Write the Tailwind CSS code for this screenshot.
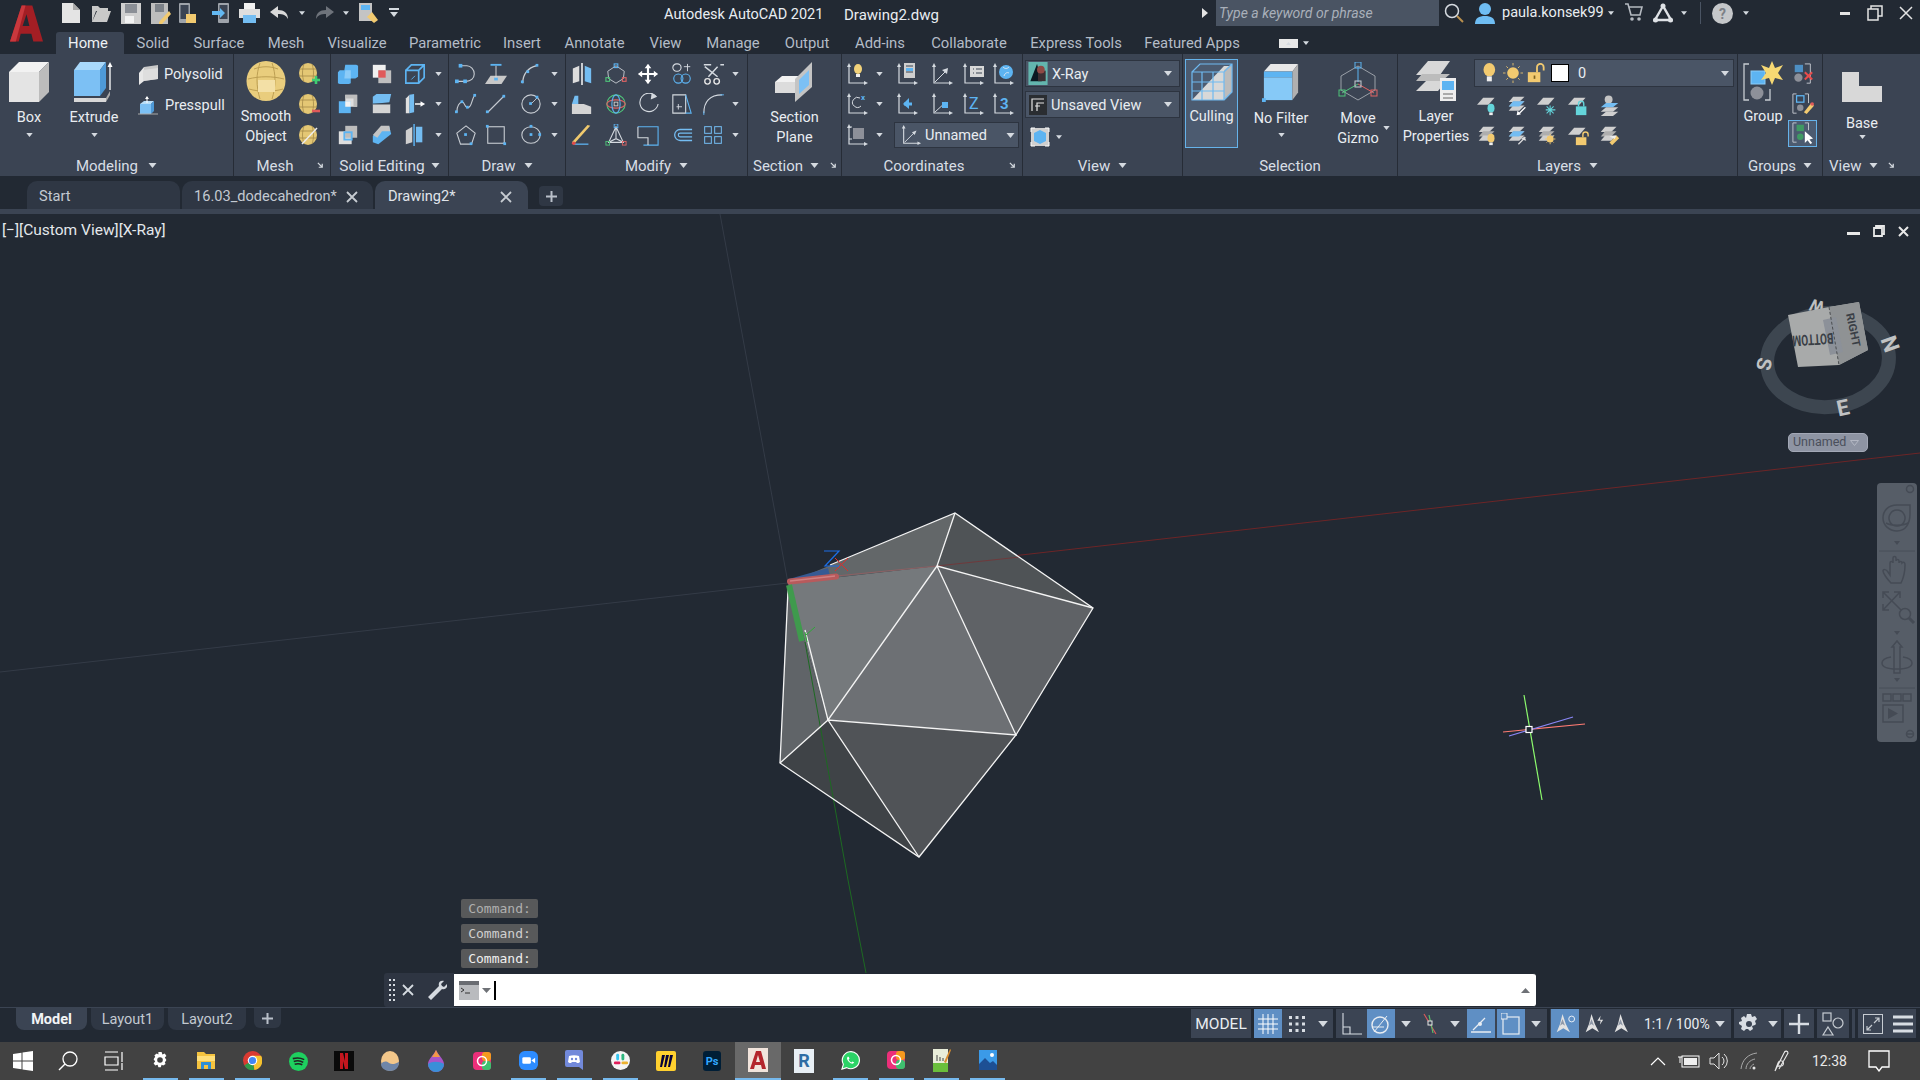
<!DOCTYPE html>
<html>
<head>
<title>Autodesk AutoCAD 2021</title>
<script src="https://cdn.jsdelivr.net/npm/@tailwindcss/browser@4"></script>
</head>
<body class="bg-[#222933] overflow-hidden">

<!-- shared icons -->
<svg class="absolute w-0 h-0">
  <symbol id="dn" viewBox="0 0 8 5"><polygon points="0,0 8,0 4,5" fill="#d5dae0"/></symbol>
  <symbol id="corner" viewBox="0 0 8 8"><path d="M1 1l5 5M6 2v4H2" stroke="#d5dae0" stroke-width="1.4" fill="none"/></symbol>
  <symbol id="cube" viewBox="0 0 40 40"><polygon points="0,10 10,0 40,0 30,10" fill="#f2f2f2"/><polygon points="0,10 30,10 30,40 0,40" fill="#e4e4e4"/><polygon points="30,10 40,0 40,30 30,40" fill="#bcbcbc"/></symbol>
  <symbol id="extrude" viewBox="0 0 40 40"><polygon points="0,36 32,36 32,40 0,40" fill="#d8d8d8"/><polygon points="32,36 32,40 36,33 36,29" fill="#aaa"/><polygon points="0,8 6,0 32,0 26,8" fill="#a8d8fa"/><rect y="8" width="26" height="26" fill="#7cc0f4"/><polygon points="26,8 32,0 32,26 26,34" fill="#4e9ad8"/><path d="M36 28V2" stroke="#fff" stroke-width="1.3"/><polygon points="33.5,5 36,0 38.5,5" fill="#fff"/></symbol>
  <symbol id="polysolid" viewBox="0 0 20 20"><polygon points="1,8 6,2 6,16 1,20" fill="#e8e8e8"/><polygon points="6,2 20,0 20,14 6,16" fill="#c9c9c9"/><polygon points="5,5 20,3 20,14 5,16" fill="#dedede"/></symbol>
  <symbol id="presspull" viewBox="0 0 20 20"><polygon points="2,8 6,5 16,5 13,8" fill="#b8def9"/><rect x="2" y="8" width="11" height="10" fill="#7cc0f4"/><polygon points="13,8 16,5 16,15 13,18" fill="#4e9ad8"/><path d="M9 1v6" stroke="#fff"/><polygon points="7,3 9,0 11,3" fill="#fff"/><path d="M0 18h20" stroke="#aaa"/></symbol>
  <symbol id="egg" viewBox="0 0 40 40"><ellipse cx="20" cy="20" rx="19.5" ry="20" fill="#e9cd7d"/><path d="M8 8c8-3 16-3 24 0M2 18c12-3 24-3 36 0M14 2c-2 6-3 11-3 17s1 13 3 19M26 2c2 6 3 11 3 17s-1 13-3 19M3 28c10 3 24 3 34 0" stroke="#b89a4e" stroke-width=".9" fill="none"/><path d="M12 19h17v12H12z" fill="#f3e0a6"/></symbol>
  <symbol id="meshball" viewBox="0 0 20 20"><ellipse cx="9" cy="10" rx="9" ry="10" fill="#e4c774"/><path d="M1 6h16M0 13h18M5 1c-2 6-2 12 0 18M13 1c2 6 2 12 0 18" stroke="#9c8343" stroke-width=".7" fill="none"/></symbol>
  <symbol id="u1" viewBox="0 0 24 24"><path d="M9 2h12l2 1v12l-3 2h-5v5l-2 1H3l-2-1V10l2-2h5z" fill="#5db4f2"/><path d="M9 8h6v9H8z" fill="#8cccf8"/></symbol>
  <symbol id="u2" viewBox="0 0 24 24"><rect x="2" y="2" width="14" height="14" fill="#f0f0f0"/><rect x="8" y="8" width="14" height="14" fill="#bfbfbf"/><rect x="8" y="8" width="8" height="8" fill="#e05a5a"/></symbol>
  <symbol id="u3" viewBox="0 0 24 24"><path d="M2 8h14v14H2zM2 8l6-6h14v14l-6 6M16 8l6-6" fill="none" stroke="#5db4f2" stroke-width="1.8"/><path d="M8 18l4-4" stroke="#5db4f2"/></symbol>
  <symbol id="u4" viewBox="0 0 24 24"><rect x="9" y="2" width="13" height="13" fill="#dedede"/><polygon points="9,2 22,2 22,15 18,15 18,6 9,6" fill="#bdbdbd"/><rect x="2" y="9" width="13" height="13" fill="#5db4f2"/><rect x="9" y="9" width="6" height="6" fill="#f2f2f2"/></symbol>
  <symbol id="u5" viewBox="0 0 24 24"><polygon points="2,12 2,4 6,1 22,1 20,10" fill="#74bdf2"/><rect x="2" y="12" width="19" height="10" fill="#d4d4d4"/><path d="M2 12h19" stroke="#333f4e"/></symbol>
  <symbol id="u6" viewBox="0 0 24 24"><polygon points="2,6 6,2 6,22 2,22" fill="#e0e0e0"/><polygon points="6,2 11,1 11,21 6,22" fill="#74bdf2"/><path d="M12 12h8" stroke="#fff" stroke-width="1.6"/><polygon points="18,9 23,12 18,15" fill="#fff"/></symbol>
  <symbol id="u7" viewBox="0 0 24 24"><rect x="2" y="8" width="14" height="14" fill="#dedede"/><rect x="9" y="2" width="13" height="13" fill="#bdbdbd"/><rect x="8" y="9" width="8" height="8" fill="none" stroke="#5db4f2" stroke-width="2"/></symbol>
  <symbol id="u8" viewBox="0 0 24 24"><polygon points="2,13 12,3 20,3 22,11 8,22 2,20" fill="#5db4f2"/><polygon points="2,12 11,2 20,2 21,8 12,8 7,15" fill="#c4c4c4"/></symbol>
  <symbol id="u9" viewBox="0 0 24 24"><polygon points="2,7 9,3 9,20 2,22" fill="#cfcfcf"/><polygon points="13,3 20,3 20,20 13,20" fill="#74bdf2"/><path d="M11 0v24" stroke="#5db4f2" stroke-width="1.6"/></symbol>
  <symbol id="d1" viewBox="0 0 24 24"><path d="M2 20h10c5 0 9-3 9-8s-4-9-8-9H5" fill="none" stroke="#c7ccd2" stroke-width="1.2"/><rect x="0" y="18" width="4" height="4" fill="#5db4f2"/><rect x="9" y="18" width="4" height="4" fill="#5db4f2"/><rect x="4" y="1" width="4" height="4" fill="#5db4f2"/></symbol>
  <symbol id="d2" viewBox="0 0 24 24"><polygon points="6,14 24,14 18,23 0,23" fill="#c8c8c8"/><path d="M12 3v14" stroke="#ddd"/><rect x="10" y="16" width="4" height="3" fill="#5db4f2"/><path d="M6 2h12" stroke="#5db4f2" stroke-width="2"/></symbol>
  <symbol id="d3" viewBox="0 0 24 24"><path d="M3 22c0-10 6-17 15-19" fill="none" stroke="#c7ccd2" stroke-width="1.4"/><rect x="1" y="19" width="3" height="3" fill="#5db4f2"/><rect x="7" y="8" width="3" height="3" fill="#5db4f2"/><rect x="17" y="1" width="3" height="3" fill="#5db4f2"/></symbol>
  <symbol id="d4" viewBox="0 0 24 24"><path d="M2 21c0-7 3-11 6-11s2 6 6 6 4-8 7-13" fill="none" stroke="#c7ccd2" stroke-width="1.2"/><rect x="0" y="19" width="3" height="3" fill="#5db4f2"/><rect x="6" y="8" width="3" height="3" fill="#5db4f2"/><rect x="12" y="14" width="3" height="3" fill="#5db4f2"/><rect x="20" y="1" width="3" height="3" fill="#5db4f2"/></symbol>
  <symbol id="d5" viewBox="0 0 24 24"><path d="M3 21L21 3" stroke="#c7ccd2" stroke-width="1.2"/><rect x="1" y="19" width="3" height="3" fill="#5db4f2"/><rect x="19" y="2" width="3" height="3" fill="#5db4f2"/></symbol>
  <symbol id="d6" viewBox="0 0 24 24"><circle cx="12" cy="12" r="10" fill="none" stroke="#c7ccd2" stroke-width="1.2"/><path d="M12 12l7-7" stroke="#c7ccd2"/><rect x="10" y="10" width="3" height="3" fill="#5db4f2"/><rect x="17" y="3" width="3" height="3" fill="#5db4f2"/></symbol>
  <symbol id="d7" viewBox="0 0 24 24"><polygon points="12,2 22,10 18,22 6,22 2,10" fill="none" stroke="#c7ccd2" stroke-width="1.2"/><rect x="10" y="10" width="3" height="3" fill="#5db4f2"/><rect x="16" y="20" width="3" height="3" fill="#5db4f2"/></symbol>
  <symbol id="d8" viewBox="0 0 24 24"><rect x="3" y="3" width="18" height="18" fill="none" stroke="#c7ccd2" stroke-width="1.2"/><rect x="1" y="1" width="3" height="3" fill="#5db4f2"/><rect x="20" y="20" width="3" height="3" fill="#5db4f2"/></symbol>
  <symbol id="d9" viewBox="0 0 24 24"><ellipse cx="12" cy="12" rx="10" ry="9" fill="none" stroke="#c7ccd2" stroke-width="1.2"/><rect x="10.500" y="10" width="3" height="3" fill="#5db4f2"/><rect x="10.500" y="1" width="3" height="3" fill="#5db4f2"/><rect x="20" y="10" width="3" height="3" fill="#5db4f2"/></symbol>
  <symbol id="m1" viewBox="0 0 24 24"><polygon points="2,6 9,3 9,20 2,22" fill="#ddd"/><polygon points="15,3 22,6 22,22 15,20" fill="#74bdf2"/><path d="M12 0v24" stroke="#fff" stroke-width="1.6"/></symbol>
  <symbol id="m2" viewBox="0 0 24 24"><path d="M12 3L3 9l1 8 8 5 8-5 1-8z" fill="none" stroke="#c7ccd2"/><rect x="10" y="1" width="4" height="4" fill="none" stroke="#5db4f2" stroke-width="1.2"/><rect x="1" y="16" width="4" height="4" fill="none" stroke="#4fc37a" stroke-width="1.2"/><rect x="19" y="16" width="4" height="4" fill="none" stroke="#e06464" stroke-width="1.2"/></symbol>
  <symbol id="m3" viewBox="0 0 24 24"><path d="M12 1v22M1 12h22" stroke="#fff" stroke-width="2.6"/><path d="M12 0l4 5H8zM12 24l4-5H8zM0 12l5-4v8zM24 12l-5-4v8z" fill="#fff"/></symbol>
  <symbol id="m4" viewBox="0 0 24 24"><rect x="2" y="1" width="9" height="8" rx="4" fill="none" stroke="#d5dae0" stroke-width="1.2"/><path d="M14 4h7M18 1v8" stroke="#d5dae0"/><circle cx="8" cy="17" r="5" fill="none" stroke="#5db4f2" stroke-width="1.2"/><circle cx="16" cy="17" r="5" fill="none" stroke="#5db4f2" stroke-width="1.2"/></symbol>
  <symbol id="m5" viewBox="0 0 24 24"><path d="M2 2h8M20 2h4M3 4l14 11M17 4L7 15" stroke="#d5dae0" stroke-width="1.6"/><circle cx="6" cy="20" r="3" fill="none" stroke="#e6e6e6" stroke-width="1.5"/><circle cx="16" cy="20" r="3" fill="none" stroke="#e6e6e6" stroke-width="1.5"/></symbol>
  <symbol id="m6" viewBox="0 0 24 24"><polygon points="1,12 4,3 8,3 8,12" fill="#74bdf2"/><polygon points="1,12 14,12 22,15 22,23 1,23" fill="#d4d4d4"/></symbol>
  <symbol id="m7" viewBox="0 0 24 24"><circle cx="12" cy="12" r="10" fill="none" stroke="#4fc37a" stroke-width="1.2"/><ellipse cx="12" cy="12" rx="10" ry="4.500" fill="none" stroke="#e06464" stroke-width="1.2"/><ellipse cx="12" cy="12" rx="4.500" ry="10" fill="none" stroke="#5db4f2" stroke-width="1.2"/><rect x="10" y="10" width="4" height="4" fill="none" stroke="#ccc"/></symbol>
  <symbol id="m8" viewBox="0 0 24 24"><path d="M21 4A10 10 0 1 0 23 12" fill="none" stroke="#d5dae0" stroke-width="1.2"/><polygon points="16,0 22,4 15,7" fill="#d5dae0"/></symbol>
  <symbol id="m9" viewBox="0 0 24 24"><path d="M2 2h14v20H2z" fill="none" stroke="#d5dae0" stroke-width="1.2"/><path d="M16 2l6 20h-6" fill="none" stroke="#5db4f2" stroke-width="1.2"/><path d="M6 15h6M8 12v6" stroke="#d5dae0"/></symbol>
  <symbol id="m10" viewBox="0 0 24 24"><path d="M2 22C2 10 8 2 22 2" fill="none" stroke="#d5dae0" stroke-width="1.2"/><path d="M2 24v-4M20 2h4" stroke="#5db4f2"/></symbol>
  <symbol id="m11" viewBox="0 0 24 24"><polygon points="3,22 21,2 18,1 1,20" fill="#f0ca6e"/><path d="M3 22h16" stroke="#5db4f2" stroke-width="1.4"/><circle cx="3" cy="21" r="2" fill="#e04b4b"/></symbol>
  <symbol id="m12" viewBox="0 0 24 24"><path d="M12 3L4 20h16zM12 3v13M4 20l8-4 8 4" fill="none" stroke="#d5dae0" stroke-width="1.2"/><rect x="10" y="0" width="4" height="4" fill="none" stroke="#5db4f2"/><rect x="1" y="19" width="4" height="4" fill="none" stroke="#4fc37a"/><rect x="19" y="19" width="4" height="4" fill="none" stroke="#e06464"/></symbol>
  <symbol id="m13" viewBox="0 0 24 24"><path d="M1 3h22v20H7" fill="none" stroke="#5db4f2" stroke-width="1.2"/><path d="M1 3v12h11v8" fill="none" stroke="#d5dae0" stroke-width="1.2"/></symbol>
  <symbol id="m14" viewBox="0 0 24 24"><path d="M23 6H10a6 6 0 0 0 0 12h13M23 10H10a2 2 0 0 0 0 4h13" fill="none" stroke="#74bdf2" stroke-width="1.4"/></symbol>
  <symbol id="m15" viewBox="0 0 24 24"><g fill="none" stroke="#74bdf2" stroke-width="1.2"><rect x="2" y="2" width="8" height="8"/><rect x="14" y="2" width="8" height="8"/><rect x="2" y="14" width="8" height="8"/><rect x="14" y="14" width="8" height="8"/></g></symbol>
  <symbol id="section" viewBox="0 0 40 40"><polygon points="0,20 7,14 26,14 26,20" fill="#f2f2f2"/><rect y="20" width="22" height="11" fill="#dcdcdc"/><polygon points="20,17 37,0 37,25 20,40" fill="#c4c4c4"/><polygon points="24,18 34,8 34,23 24,32" fill="#7cc0f4"/></symbol>
  <symbol id="ax" viewBox="0 0 24 24"><path d="M4 3v18h17" fill="none" stroke="#d5dae0" stroke-width="1.2"/><polygon points="2,5 4,1 6,5" fill="#d5dae0"/><polygon points="19,19 23,21 19,23" fill="#d5dae0"/></symbol>
  <symbol id="c1" viewBox="0 0 24 24"><use href="#ax"/><ellipse cx="13" cy="7" rx="4" ry="5" fill="#f2d27a"/><rect x="11" y="12" width="4" height="3" fill="#eee"/></symbol>
  <symbol id="c2" viewBox="0 0 24 24"><use href="#ax"/><rect x="9" y="1" width="11" height="15" fill="#cfcfcf"/><path d="M11 4h7M11 10h7" stroke="#3b4453"/><rect x="11" y="6" width="7" height="3" fill="#5db4f2"/></symbol>
  <symbol id="c3" viewBox="0 0 24 24"><use href="#ax"/><path d="M5 20L17 8" stroke="#d5dae0"/><polygon points="18,6 17,12 12,8" fill="#d5dae0"/></symbol>
  <symbol id="c4" viewBox="0 0 24 24"><use href="#ax"/><rect x="9" y="4" width="14" height="11" fill="#d8d8d8"/><path d="M12 7h1M15 7h6M12 11h1M15 11h6" stroke="#3b4453"/></symbol>
  <symbol id="c5" viewBox="0 0 24 24"><use href="#ax"/><circle cx="15" cy="10" r="7" fill="#5db4f2"/><path d="M12 5c2 2 4 2 6 0M13 14c1-3 3-4 5-3" stroke="#dce7f2" fill="none"/></symbol>
  <symbol id="c7" viewBox="0 0 24 24"><use href="#ax"/><path d="M9 12h8" stroke="#5db4f2" stroke-width="3"/><polygon points="14,6 8,12 14,17" fill="#5db4f2"/></symbol>
  <symbol id="c8" viewBox="0 0 24 24"><use href="#ax"/><path d="M5 20L16 10" stroke="#d5dae0"/><rect x="12" y="10" width="6" height="6" fill="#5db4f2"/></symbol>
  <symbol id="c11" viewBox="0 0 24 24"><use href="#ax"/><rect x="8" y="5" width="11" height="11" fill="#8d9099"/><path d="M4 4h3M4 16h3" stroke="#d5dae0"/></symbol>
  <symbol id="xray" viewBox="0 0 20 24"><rect width="20" height="24" fill="#63b5ae"/><polygon points="9,2 14,20 2,20" fill="#0b1a22"/><rect x="10" y="9" width="8" height="11" fill="#3b3033"/><circle cx="13" cy="8" r="4" fill="#8f4a45"/></symbol>
  <symbol id="unsaved" viewBox="0 0 18 20"><rect width="18" height="20" fill="#2a2d31"/><path d="M3 16V4h12M8 16V8h7M6 11h5" stroke="#e4e4e4" stroke-width="1.2" fill="none"/></symbol>
  <symbol id="viewbox" viewBox="0 0 20 20"><rect x="1" y="1" width="18" height="18" fill="#d0d0d0"/><path d="M1 5V1h4M15 1h4v4M19 15v4h-4M5 19H1v-4" stroke="#fff" fill="none"/><path d="M10 3l6 3v8l-6 3-6-3V6z" fill="#5db4f2"/></symbol>
  <symbol id="culling" viewBox="0 0 42 40"><polygon points="1,38 33,4 41,4 41,30 33,38" fill="#d8d8d8"/><polygon points="33,8 41,2 41,30 33,38" fill="#bcbcbc"/><path d="M1 10h32v28H1zM1 10l8-8h32v28l-8 8M33 10l8-8M11 10v28M22 10v28M1 20h32M1 29h32" fill="none" stroke="#6fb9f0" stroke-width="1.2"/></symbol>
  <symbol id="nofilter" viewBox="0 0 40 40"><polygon points="2,8 9,0 38,0 32,8" fill="#e8e8e8"/><rect x="2" y="8" width="30" height="6" fill="#5db4f2"/><rect x="2" y="14" width="30" height="24" fill="#86c9f7"/><polygon points="32,8 38,0 38,30 32,38" fill="#b0b0b0"/><rect x="0" y="36" width="4" height="4" fill="#5db4f2"/></symbol>
  <symbol id="gizmo" viewBox="0 0 40 40"><path d="M20 4L3 14v14l17 10 17-10V14z" fill="none" stroke="#9aa0a8"/><path d="M20 5v15" stroke="#5db4f2"/><path d="M20 22L4 31" stroke="#4fc37a"/><path d="M20 22l16 9" stroke="#e06464"/><rect x="17" y="0" width="6" height="6" fill="none" stroke="#5db4f2"/><rect x="17" y="19" width="6" height="6" fill="none" stroke="#c7ccd2"/><rect x="1" y="28" width="6" height="6" fill="none" stroke="#4fc37a"/><rect x="33" y="28" width="6" height="6" fill="none" stroke="#e06464"/></symbol>
  <symbol id="layerprops" viewBox="0 0 40 40"><polygon points="0,14 12,0 34,0 24,14" fill="#d8d8d8"/><polygon points="0,20 6,13 34,13 26,20" fill="#bcbcbc"/><polygon points="0,30 10,20 30,20 22,30" fill="#d8d8d8"/><rect x="24" y="17" width="16" height="23" fill="#ededed"/><rect x="26" y="20" width="12" height="9" fill="#5db4f2"/><path d="M27 33h10M27 37h10" stroke="#666"/></symbol>
  <symbol id="l0" viewBox="0 0 24 24"><ellipse cx="10" cy="8" rx="7" ry="8" fill="#f2ca70"/><rect x="7" y="16" width="6" height="6" fill="#eee"/></symbol>
  <symbol id="l1" viewBox="0 0 24 24"><circle cx="12" cy="12" r="7" fill="#f2ca70"/><path d="M12 0v3M12 21v3M0 12h3M21 12h3M4 4l2 2M18 18l2 2M20 4l-2 2M4 20l2-2" stroke="#f2ca70"/></symbol>
  <symbol id="l2" viewBox="0 0 24 24"><rect x="1" y="11" width="15" height="12" fill="#f2ca70"/><path d="M12 11V5a4 4 0 0 1 8 0v4" fill="none" stroke="#f2ca70" stroke-width="2.2"/><rect x="8" y="15" width="2" height="4" fill="#7d6120"/></symbol>
  <symbol id="s1" viewBox="0 0 24 24"><polygon points="0,11 7,3 20,3 13,11" fill="#cfcfcf"/><ellipse cx="16" cy="15" rx="4" ry="5" fill="#64d5db"/><rect x="14" y="20" width="4" height="3" fill="#eee"/></symbol>
  <symbol id="stack" viewBox="0 0 24 24"><polygon points="2,8 7,2 20,2 14,8" fill="#cfcfcf"/><polygon points="2,13 7,7 20,7 14,13" fill="#aeaeae"/><polygon points="2,18 7,12 20,12 14,18" fill="#cfcfcf"/></symbol>
  <symbol id="s2" viewBox="0 0 24 24"><use href="#stack"/><polygon points="2,13 7,7 20,7 14,13" fill="#74bdf2"/><path d="M13 22l8-8" stroke="#fff" stroke-width="1.4"/><polygon points="11,23 12,18 16,22" fill="#fff"/></symbol>
  <symbol id="s3" viewBox="0 0 24 24"><polygon points="0,11 7,3 20,3 13,11" fill="#cfcfcf"/><path d="M15 12v11M10 17h11M11 13l8 8M19 13l-8 8" stroke="#64d5db" stroke-width="1.2"/></symbol>
  <symbol id="s4" viewBox="0 0 24 24"><polygon points="0,11 7,3 20,3 13,11" fill="#cfcfcf"/><rect x="9" y="13" width="12" height="10" fill="#64d5db"/><path d="M12 13v-3a3 3 0 0 1 6 0v3" fill="none" stroke="#64d5db" stroke-width="1.6"/></symbol>
  <symbol id="s5" viewBox="0 0 24 24"><circle cx="11" cy="5" r="4.500" fill="#c4c4c4"/><polygon points="2,14 8,9 22,9 16,14" fill="#74bdf2"/><polygon points="2,19 8,14 22,14 16,19" fill="#cfcfcf"/><polygon points="2,24 8,19 22,19 16,24" fill="#cfcfcf"/></symbol>
  <symbol id="s6" viewBox="0 0 24 24"><use href="#stack"/><ellipse cx="16" cy="15" rx="4" ry="5" fill="#f2ca70"/><rect x="14" y="20" width="4" height="3" fill="#eee"/></symbol>
  <symbol id="s7" viewBox="0 0 24 24"><use href="#stack"/><polygon points="2,13 7,7 20,7 14,13" fill="#74bdf2"/><path d="M13 22l8-8" stroke="#ddd" stroke-width="1.4"/><polygon points="20,13 22,18 16,16" fill="#ddd"/></symbol>
  <symbol id="s8" viewBox="0 0 24 24"><use href="#stack"/><circle cx="15" cy="16" r="4" fill="#f2ca70"/><path d="M15 10v2M15 20v2M9 16h2M19 16h2M11 12l1 1M18 19l1 1M19 12l-1 1M11 20l1-1" stroke="#f2ca70"/></symbol>
  <symbol id="s9" viewBox="0 0 24 24"><polygon points="0,11 7,3 20,3 13,11" fill="#cfcfcf"/><rect x="9" y="14" width="12" height="9" fill="#f2ca70"/><path d="M17 14v-3a3 3 0 0 1 6 0v2" fill="none" stroke="#f2ca70" stroke-width="1.6"/></symbol>
  <symbol id="s10" viewBox="0 0 24 24"><use href="#stack"/><polygon points="12,20 20,12 23,15 15,23" fill="#f2ca70"/><polygon points="12,13 20,12 18,16" fill="#eee"/></symbol>
  <symbol id="group" viewBox="0 0 40 40"><path d="M6 3H1v36h5M22 39h5V28" fill="none" stroke="#c7ccd2" stroke-width="1.3"/><rect x="8" y="10" width="14" height="13" fill="#5db4f2" stroke="#8cccf8" stroke-width="1"/><circle cx="14" cy="32" r="6.500" fill="#8d9099"/><polygon points="29,0 32,7 40,4 35,12 40,19 32,17 29,24 26,17 18,19 23,12 18,4 26,7" fill="#f6d873"/></symbol>
  <symbol id="g1" viewBox="0 0 24 24"><path d="M14 1h6v21h-4" fill="none" stroke="#c7ccd2"/><rect x="3" y="2" width="9" height="8" fill="#4d8fc4"/><circle cx="7" cy="16" r="4.500" fill="#8d9099"/><path d="M14 10l8 8M22 10l-8 8" stroke="#e84c4c" stroke-width="2.200"/></symbol>
  <symbol id="g2" viewBox="0 0 24 24"><path d="M5 1H1v21h4M14 1h4v10" fill="none" stroke="#c7ccd2"/><rect x="5" y="3" width="8" height="7" fill="none" stroke="#5db4f2" stroke-width="1.4"/><circle cx="9" cy="16" r="3.500" fill="#8d9099"/><polygon points="13,21 21,11 24,14 16,23" fill="#f2ca70"/><circle cx="22" cy="12" r="2" fill="#e05a5a"/></symbol>
  <symbol id="g3" viewBox="0 0 24 24"><path d="M5 1H1v21h4M14 1h4v8" fill="none" stroke="#c7ccd2"/><rect x="5" y="3" width="8" height="7" fill="#3f9a63"/><circle cx="9" cy="16" r="3.500" fill="#3f9a63"/><polygon points="14,10 14,23 17,20 20,24 22,23 19,19 23,18" fill="#fff"/></symbol>
  <symbol id="base" viewBox="0 0 40 30"><polygon points="0,0 17,0 17,14 40,14 40,30 0,30" fill="#d8d8d8"/></symbol>
  <symbol id="ucs2" viewBox="0 0 24 24"><use href="#ax"/><path d="M5 20L16 9" stroke="#d5dae0"/><polygon points="18,7 16,12 13,9" fill="#d5dae0"/></symbol>
  <symbol id="anno" viewBox="0 0 24 24"><polygon points="9,0 13,12 18,22 10,17 2,22 6,12" fill="#e2e2e2"/><polygon points="9,6 12,14 9,12 6,14" fill="#8f98a8"/></symbol>
</svg>

<!-- title bar -->
<div class="h-[32px] flex items-center relative text-[14.5px] font-[Roboto,sans-serif] text-[#e9edf1]">
  <div class="w-[56px] h-full flex items-start justify-center pt-[5px] pr-[4px]">
    <svg width="33" height="37" viewBox="0 0 34 37"><path d="M12 0h11l11 37H24l-2-8H11l-2 8H0zM13 21h7l-3-12z" fill="#a31e24"/><path d="M12 0h4L6 37H0z" fill="#c9383d"/></svg>
  </div>
  <div class="flex items-center h-[26px] self-start">
    <div class="w-[30px] flex justify-center"><svg width="20" height="20" viewBox="0 0 20 20"><path d="M1 0h11l7 7v13H1z" fill="#e4e4e4"/><path d="M12 0v7h7" fill="#a9a9a9"/></svg></div>
    <div class="w-[30px] flex justify-center"><svg width="20" height="18" viewBox="0 0 20 18"><path d="M1 18V2h6l2 2h8v3H5L1 18h15l4-11H6" fill="#c9c9c9"/></svg></div>
    <div class="w-[30px] flex justify-center"><svg width="20" height="21" viewBox="0 0 20 21"><path d="M0 0h20v21H0z" fill="#cfcfcf"/><rect x="4" y="1" width="12" height="9" fill="#8b8f96"/><rect x="4" y="13" width="9" height="7" fill="#f2f2f2"/></svg></div>
    <div class="w-[29px] flex justify-center"><svg width="20" height="21" viewBox="0 0 20 21"><path d="M0 0h17v21H0z" fill="#bdbdbd"/><rect x="4" y="1" width="9" height="8" fill="#7d8289"/><polygon points="8,19 18,8 20,11 11,21 8,21" fill="#f2ca70"/></svg></div>
    <div class="w-[26px] flex justify-center"><svg width="18" height="20" viewBox="0 0 18 20"><rect width="11" height="20" rx="1" fill="#9ea3aa"/><rect x="1.500" y="2" width="8" height="14" fill="#3b4453"/><path d="M7 11h10v9H7z" fill="#f2ca70"/></svg></div>
    <div class="w-[33px] pl-[6px] flex justify-center"><svg width="18" height="20" viewBox="0 0 18 20"><rect x="6" width="11" height="20" rx="1" fill="#9ea3aa"/><rect x="7.500" y="2" width="8" height="14" fill="#3b4453"/><path d="M0 8h8V5l5 5-5 5v-3H0z" fill="#63b8f2"/></svg></div>
    <div class="w-[30px] flex justify-center"><svg width="21" height="20" viewBox="0 0 21 20"><rect x="5" width="11" height="6" fill="#f2f2f2"/><rect y="6" width="21" height="9" fill="#dedede"/><rect x="4" y="12" width="13" height="8" fill="#74bdf2"/></svg></div>
    <div class="w-[31px] flex justify-center"><svg width="20" height="14" viewBox="0 0 20 14"><path d="M8 0L0 6l8 6V8c5 0 8 1 10 5 0-6-4-9-10-9z" fill="#d9d9d9"/></svg></div>
    <div class="w-[14px] flex justify-center"><svg class="w-[6px] h-[4px]"><use href="#dn"/></svg></div>
    <div class="w-[30px] flex justify-center"><svg width="20" height="14" viewBox="0 0 20 14"><path d="M12 0l8 6-8 6V8C7 8 4 9 2 13c0-6 4-9 10-9z" fill="#6e737b"/></svg></div>
    <div class="w-[14px] flex justify-center"><svg class="w-[6px] h-[4px]"><use href="#dn"/></svg></div>
    <div class="w-[30px] flex justify-center"><svg width="20" height="20" viewBox="0 0 20 20"><rect x="1" width="13" height="18" fill="#c4c4c4"/><rect x="3" y="2" width="9" height="5" fill="#5db4f2"/><polygon points="9,14 14,9 20,17 16,20" fill="#f2ca70"/></svg></div>
    <div class="w-[22px] flex justify-center"><svg width="10" height="10" viewBox="0 0 10 10"><path d="M0 1h10" stroke="#d5dae0" stroke-width="2"/><polygon points="1,4 9,4 5,9" fill="#d5dae0"/></svg></div>
  </div>
  <div class="absolute left-[664px] top-[5px] leading-[20px] whitespace-nowrap">Autodesk AutoCAD 2021</div>
  <div class="absolute left-[844px] top-[5px] leading-[20px] text-[15px] whitespace-nowrap">Drawing2.dwg</div>
  <div class="ml-auto flex items-center self-start h-[26px]">
    <svg class="w-[6px] h-[10px] mr-[8px]" viewBox="0 0 6 10"><polygon points="0,0 6,5 0,10" fill="#e4e4e4"/></svg>
    <div class="w-[223px] h-[26px] bg-[#4a5463] pl-[3px] text-[14px] italic text-[#a9b0ba] flex items-center">Type a keyword or phrase</div>
    <svg class="ml-[5px] w-[20px] h-[20px]" viewBox="0 0 20 20"><circle cx="8" cy="8" r="6.500" fill="none" stroke="#d5dae0" stroke-width="1.500"/><path d="M13 13l6 6" stroke="#b98f4e" stroke-width="2"/></svg>
    <svg class="ml-[10px] w-[22px] h-[22px]" viewBox="0 0 22 22"><circle cx="11" cy="7" r="6" fill="#6fbdf3"/><path d="M1 22c0-6 4-8 10-8s10 2 10 8z" fill="#6fbdf3"/></svg>
    <span class="ml-[6px] w-[101px] text-[14.5px] whitespace-nowrap">paula.konsek99</span>
    <svg class="ml-[5px] w-[6px] h-[4px]"><use href="#dn"/></svg>
    <svg class="ml-[11px] w-[18px] h-[20px]" viewBox="0 0 18 20"><path d="M0 1h3l3 11h9l2-8H4" fill="none" stroke="#b5bac1" stroke-width="1.600"/><circle cx="7" cy="16" r="1.800" fill="#b5bac1"/><circle cx="14" cy="16" r="1.800" fill="#b5bac1"/></svg>
    <svg class="ml-[10px] w-[20px] h-[20px]" viewBox="0 0 20 20"><path d="M10 3L2 17h16z" fill="none" stroke="#dfe2e6" stroke-width="2.400"/><circle cx="10" cy="3" r="2.500" fill="#dfe2e6"/><circle cx="2.500" cy="17" r="2.500" fill="#dfe2e6"/><circle cx="17.500" cy="17" r="2.500" fill="#dfe2e6"/></svg>
    <svg class="ml-[8px] w-[6px] h-[4px]"><use href="#dn"/></svg>
    <div class="ml-[13px] w-px h-[22px] bg-[#4a5463]"></div>
    <svg class="ml-[11px] w-[21px] h-[21px]" viewBox="0 0 21 21"><circle cx="10.500" cy="10.500" r="10.500" fill="#c5c7ca"/><text x="10.500" y="15.500" text-anchor="middle" font-size="14" font-family="Roboto" font-weight="700" fill="#7c8087">?</text></svg>
    <svg class="ml-[10px] w-[6px] h-[4px]"><use href="#dn"/></svg>
    <svg class="ml-[91px] w-[10px] h-[3px]" viewBox="0 0 10 3"><rect width="10" height="3" fill="#e4e4e4"/></svg>
    <svg class="ml-[17px] w-[16px] h-[16px]" viewBox="0 0 16 16"><path d="M4 4V1h11v10h-4M1 4h10v11H1z" fill="none" stroke="#e4e4e4" stroke-width="1.500"/></svg>
    <svg class="ml-[16px] mr-[7px] w-[14px] h-[14px]" viewBox="0 0 14 14"><path d="M1 1l12 12M13 1L1 13" stroke="#e4e4e4" stroke-width="1.500"/></svg>
  </div>
</div>

<!-- ribbon tabs -->
<div class="h-[22px] pl-[56px] flex items-center text-[14.8px] font-[Roboto,sans-serif] text-[#b4bcc7] whitespace-nowrap">
  <div class="w-[68px] h-full bg-[#3b4453] rounded-t-[3px] text-[#eef1f4] flex items-center justify-center pr-[4px]">Home</div>
  <div class="w-[58px] text-center">Solid</div>
  <div class="w-[74px] text-center">Surface</div>
  <div class="w-[60px] text-center">Mesh</div>
  <div class="w-[82px] text-center">Visualize</div>
  <div class="w-[94px] text-center">Parametric</div>
  <div class="w-[60px] text-center">Insert</div>
  <div class="w-[85px] text-center">Annotate</div>
  <div class="w-[57px] text-center">View</div>
  <div class="w-[78px] text-center">Manage</div>
  <div class="w-[70px] text-center">Output</div>
  <div class="w-[76px] text-center">Add-ins</div>
  <div class="w-[102px] text-center">Collaborate</div>
  <div class="w-[112px] text-center">Express Tools</div>
  <div class="w-[120px] text-center">Featured Apps</div>
  <div class="ml-[27px] w-[19px] h-[9px] bg-[#e8e8e8] flex items-center justify-center"><svg class="w-[5px] h-[3px] rotate-180"><use href="#dn"/></svg></div>
  <svg class="ml-[5px] w-[6px] h-[4px]"><use href="#dn"/></svg>
</div>

<!-- ribbon -->
<div class="h-[122px] flex bg-[#3b4453] text-[14.5px] leading-[20px] font-[Roboto,sans-serif] text-[#e9edf1] whitespace-nowrap">

  <!-- Modeling -->
  <div class="w-[234px] flex flex-col border-r border-[#262c36]">
    <div class="h-[101px] flex">
      <div class="w-[58px] flex flex-col items-center pt-[8px]">
        <svg class="w-[40px] h-[40px]"><use href="#cube"/></svg>
        <span class="mt-[6px]">Box</span>
        <svg class="mt-[5px] w-[7px] h-[4px]"><use href="#dn"/></svg>
      </div>
      <div class="w-[72px] flex flex-col items-center pt-[8px]">
        <svg class="w-[40px] h-[40px]"><use href="#extrude"/></svg>
        <span class="mt-[6px]">Extrude</span>
        <svg class="mt-[5px] w-[7px] h-[4px]"><use href="#dn"/></svg>
      </div>
      <div class="pl-[8px] pt-[10px] flex flex-col gap-[9px]">
        <div class="h-[22px] flex items-center gap-[6px]"><svg class="w-[20px] h-[20px]"><use href="#polysolid"/></svg>Polysolid</div>
        <div class="h-[22px] flex items-center gap-[7px]"><svg class="w-[20px] h-[20px]"><use href="#presspull"/></svg>Presspull</div>
      </div>
    </div>
    <div class="h-[21px] flex items-center justify-center gap-[10px] text-[15px] text-[#d8dee5]">Modeling<svg class="w-[9px] h-[5px]"><use href="#dn"/></svg></div>
  </div>

  <!-- Mesh -->
  <div class="w-[97px] flex flex-col border-r border-[#262c36]">
    <div class="h-[101px] flex">
      <div class="w-[64px] flex flex-col items-center pt-[7px] leading-[20px]">
        <svg class="w-[40px] h-[40px]"><use href="#egg"/></svg>
        <span class="mt-[6px]">Smooth</span>
        <span>Object</span>
      </div>
      <div class="w-[24px] grid grid-rows-[31px_31px_31px] justify-items-center items-center pt-[4px]">
        <svg class="w-[22px] h-[22px]" viewBox="0 0 22 22"><use href="#meshball" width="20" height="20"/><path d="M13 17h8M17 13v8" stroke="#3fce72" stroke-width="2.600"/></svg>
        <svg class="w-[22px] h-[22px]" viewBox="0 0 22 22"><use href="#meshball" width="20" height="20"/><path d="M13 17h8" stroke="#e05a5a" stroke-width="2.600"/></svg>
        <svg class="w-[22px] h-[22px]" viewBox="0 0 22 22"><use href="#meshball" width="20" height="20"/><path d="M3 19L18 3" stroke="#eee" stroke-width="1.500"/></svg>
      </div>
    </div>
    <div class="h-[21px] flex items-center text-[15px] text-[#d8dee5]"><span class="w-[76px] text-center pl-[6px]">Mesh</span><svg class="ml-[7px] w-[7px] h-[7px]"><use href="#corner"/></svg></div>
  </div>

  <!-- Solid Editing -->
  <div class="w-[118px] flex flex-col border-r border-[#262c36]">
    <div class="h-[101px] pt-[5px] grid grid-cols-[34px_34px_32px_14px] grid-rows-[30px_30px_32px] justify-items-center items-center">
      <svg class="w-[22px] h-[22px]"><use href="#u1"/></svg><svg class="w-[22px] h-[22px]"><use href="#u2"/></svg><svg class="w-[22px] h-[22px]"><use href="#u3"/></svg><svg class="w-[7px] h-[4px]"><use href="#dn"/></svg>
      <svg class="w-[22px] h-[22px]"><use href="#u4"/></svg><svg class="w-[22px] h-[22px]"><use href="#u5"/></svg><svg class="w-[22px] h-[22px]"><use href="#u6"/></svg><svg class="w-[7px] h-[4px]"><use href="#dn"/></svg>
      <svg class="w-[22px] h-[22px]"><use href="#u7"/></svg><svg class="w-[22px] h-[22px]"><use href="#u8"/></svg><svg class="w-[22px] h-[22px]"><use href="#u9"/></svg><svg class="w-[7px] h-[4px]"><use href="#dn"/></svg>
    </div>
    <div class="h-[21px] flex items-center justify-center gap-[6px] text-[15.5px] text-[#d8dee5]">Solid Editing<svg class="w-[9px] h-[5px]"><use href="#dn"/></svg></div>
  </div>

  <!-- Draw -->
  <div class="w-[117px] flex flex-col border-r border-[#262c36]">
    <div class="h-[101px] pt-[5px] pl-[5px] grid grid-cols-[24px_36px_34px_12px] grid-rows-[30px_30px_32px] justify-items-center items-center">
      <svg class="w-[22px] h-[22px]"><use href="#d1"/></svg><svg class="w-[22px] h-[22px]"><use href="#d2"/></svg><svg class="w-[22px] h-[22px]"><use href="#d3"/></svg><svg class="w-[7px] h-[4px]"><use href="#dn"/></svg>
      <svg class="w-[22px] h-[22px]"><use href="#d4"/></svg><svg class="w-[22px] h-[22px]"><use href="#d5"/></svg><svg class="w-[22px] h-[22px]"><use href="#d6"/></svg><svg class="w-[7px] h-[4px]"><use href="#dn"/></svg>
      <svg class="w-[22px] h-[22px]"><use href="#d7"/></svg><svg class="w-[22px] h-[22px]"><use href="#d8"/></svg><svg class="w-[22px] h-[22px]"><use href="#d9"/></svg><svg class="w-[7px] h-[4px]"><use href="#dn"/></svg>
    </div>
    <div class="h-[21px] flex items-center justify-center gap-[8px] text-[15px] text-[#d8dee5]">Draw<svg class="w-[9px] h-[5px]"><use href="#dn"/></svg></div>
  </div>

  <!-- Modify -->
  <div class="w-[182px] flex flex-col border-r border-[#262c36]">
    <div class="h-[101px] pt-[5px] grid grid-cols-[32px_36px_28px_40px_22px_22px] grid-rows-[30px_30px_32px] justify-items-center items-center">
      <svg class="w-[22px] h-[22px]"><use href="#m1"/></svg><svg class="w-[22px] h-[22px]"><use href="#m2"/></svg><svg class="w-[20px] h-[20px]"><use href="#m3"/></svg><svg class="w-[22px] h-[22px]"><use href="#m4"/></svg><svg class="w-[22px] h-[22px]"><use href="#m5"/></svg><svg class="w-[7px] h-[4px]"><use href="#dn"/></svg>
      <svg class="w-[22px] h-[22px]"><use href="#m6"/></svg><svg class="w-[22px] h-[22px]"><use href="#m7"/></svg><svg class="w-[22px] h-[22px]"><use href="#m8"/></svg><svg class="w-[22px] h-[22px]"><use href="#m9"/></svg><svg class="w-[22px] h-[22px]"><use href="#m10"/></svg><svg class="w-[7px] h-[4px]"><use href="#dn"/></svg>
      <svg class="w-[22px] h-[22px]"><use href="#m11"/></svg><svg class="w-[22px] h-[22px]"><use href="#m12"/></svg><svg class="w-[22px] h-[22px]"><use href="#m13"/></svg><svg class="w-[22px] h-[22px]"><use href="#m14"/></svg><svg class="w-[20px] h-[20px]"><use href="#m15"/></svg><svg class="w-[7px] h-[4px]"><use href="#dn"/></svg>
    </div>
    <div class="h-[21px] flex items-center justify-center gap-[8px] text-[15px] text-[#d8dee5]">Modify<svg class="w-[9px] h-[5px]"><use href="#dn"/></svg></div>
  </div>

  <!-- Section -->
  <div class="w-[94px] flex flex-col border-r border-[#262c36]">
    <div class="h-[101px] flex flex-col items-center pt-[8px]">
      <svg class="w-[40px] h-[40px]"><use href="#section"/></svg>
      <span class="mt-[6px]">Section</span>
      <span>Plane</span>
    </div>
    <div class="h-[21px] flex items-center pl-[5px] text-[15px] text-[#d8dee5]">Section<svg class="ml-[7px] w-[9px] h-[5px]"><use href="#dn"/></svg><svg class="ml-[11px] w-[7px] h-[7px]"><use href="#corner"/></svg></div>
  </div>

  <!-- Coordinates -->
  <div class="w-[181px] flex flex-col border-r border-[#262c36]">
    <div class="h-[101px] pt-[5px] grid grid-cols-[30px_14px_42px_28px_34px_26px] grid-rows-[30px_30px_32px] justify-items-center items-center">
      <svg class="w-[24px] h-[24px]"><use href="#c1"/></svg><svg class="w-[7px] h-[4px]"><use href="#dn"/></svg><svg class="w-[24px] h-[24px]"><use href="#c2"/></svg><svg class="w-[24px] h-[24px]"><use href="#c3"/></svg><svg class="w-[24px] h-[24px]"><use href="#c4"/></svg><svg class="w-[24px] h-[24px]"><use href="#c5"/></svg>
      <svg class="w-[24px] h-[24px]" viewBox="0 0 24 24"><use href="#ax"/><path d="M16 14a5 5 0 1 1-1-8" fill="none" stroke="#d5dae0"/><text x="16" y="8" font-size="8" font-family="Roboto" fill="#5db4f2" font-weight="700">x</text></svg><svg class="w-[7px] h-[4px]"><use href="#dn"/></svg><svg class="w-[24px] h-[24px]"><use href="#c7"/></svg><svg class="w-[24px] h-[24px]"><use href="#c8"/></svg><svg class="w-[24px] h-[24px]" viewBox="0 0 24 24"><use href="#ax"/><text x="8" y="17" font-size="16" font-family="Roboto" fill="#5db4f2">Z</text></svg><svg class="w-[24px] h-[24px]" viewBox="0 0 24 24"><use href="#ax"/><text x="9" y="17" font-size="15" font-family="Roboto" fill="#5db4f2" font-weight="700">3</text></svg>
      <svg class="w-[24px] h-[24px]"><use href="#c11"/></svg><svg class="w-[7px] h-[4px]"><use href="#dn"/></svg>
      <div class="col-span-4 justify-self-stretch ml-[8px] -mr-[3px] h-[26px] bg-[#4a5566] border border-[#2d3440] flex items-center pl-[5px]">
        <svg class="w-[22px] h-[22px]"><use href="#ucs2"/></svg>
        <span class="ml-[3px] mt-[2px]">Unnamed</span>
        <svg class="ml-auto mr-[3px] w-[9px] h-[5px]"><use href="#dn"/></svg>
      </div>
    </div>
    <div class="h-[21px] flex items-center text-[15px] text-[#d8dee5]"><span class="w-[164px] text-center">Coordinates</span><svg class="ml-[3px] w-[7px] h-[7px]"><use href="#corner"/></svg></div>
  </div>

  <!-- View -->
  <div class="w-[160px] flex flex-col border-r border-[#262c36]">
    <div class="h-[101px] pt-[6px] px-[2px] flex flex-col gap-[4px]">
      <div class="h-[27px] bg-[#4a5566] border border-[#2d3440] flex items-center pl-[2px]">
        <svg class="w-[20px] h-[23px]"><use href="#xray"/></svg><span class="ml-[4px] mt-[2px]">X-Ray</span>
        <svg class="ml-auto mr-[6px] w-[10px] h-[5px]"><use href="#dn"/></svg>
      </div>
      <div class="h-[27px] bg-[#4a5566] border border-[#2d3440] flex items-center pl-[3px]">
        <svg class="w-[18px] h-[20px]"><use href="#unsaved"/></svg><span class="ml-[4px] mt-[2px]">Unsaved View</span>
        <svg class="ml-auto mr-[6px] w-[10px] h-[5px]"><use href="#dn"/></svg>
      </div>
      <div class="h-[26px] mt-[2px] flex items-center pl-[5px] gap-[6px]"><svg class="w-[20px] h-[20px]"><use href="#viewbox"/></svg><svg class="w-[6px] h-[4px]"><use href="#dn"/></svg></div>
    </div>
    <div class="h-[21px] flex items-center justify-center gap-[8px] text-[15px] text-[#d8dee5]">View<svg class="w-[9px] h-[5px]"><use href="#dn"/></svg></div>
  </div>

  <!-- Selection -->
  <div class="w-[215px] flex flex-col border-r border-[#262c36]">
    <div class="h-[101px] flex">
      <div class="ml-[2px] mt-[5px] w-[53px] h-[89px] bg-[#4c5b70] border border-[#66b3ea] flex flex-col items-center pt-[2px]">
        <svg class="w-[42px] h-[40px]"><use href="#culling"/></svg>
        <span class="mt-[5px]">Culling</span>
      </div>
      <div class="w-[86px] flex flex-col items-center pt-[10px]">
        <svg class="w-[40px] h-[38px]"><use href="#nofilter"/></svg>
        <span class="mt-[7px]">No Filter</span>
        <svg class="mt-[4px] w-[7px] h-[4px]"><use href="#dn"/></svg>
      </div>
      <div class="w-[68px] flex flex-col items-center pt-[8px] relative">
        <svg class="w-[40px] h-[40px]"><use href="#gizmo"/></svg>
        <span class="mt-[7px]">Move</span>
        <span>Gizmo</span>
        <svg class="absolute left-[59px] top-[72px] w-[7px] h-[4px]"><use href="#dn"/></svg>
      </div>
    </div>
    <div class="h-[21px] flex items-center justify-center text-[15px] text-[#d8dee5]">Selection</div>
  </div>

  <!-- Layers -->
  <div class="w-[340px] flex flex-col border-r border-[#262c36]">
    <div class="h-[101px] flex">
      <div class="w-[76px] flex flex-col items-center pt-[7px]">
        <svg class="w-[40px] h-[40px]"><use href="#layerprops"/></svg>
        <span class="mt-[6px]">Layer</span>
        <span>Properties</span>
      </div>
      <div class="w-[260px] pt-[5px]">
        <div class="h-[28px] bg-[#4a5566] border border-[#2d3440] flex items-center pl-[6px]">
          <svg class="w-[20px] h-[20px]"><use href="#l0"/></svg>
          <svg class="ml-[2px] w-[20px] h-[20px]"><use href="#l1"/></svg>
          <svg class="ml-[4px] w-[20px] h-[20px]"><use href="#l2"/></svg>
          <div class="ml-[4px] w-[18px] h-[18px] bg-white border border-black"></div>
          <span class="ml-[9px] mt-[2px]">0</span>
          <svg class="ml-auto mr-[3px] w-[10px] h-[5px]"><use href="#dn"/></svg>
        </div>
        <div class="mt-[3px] grid grid-cols-[26px_34px_26px_36px_26px] grid-rows-[30px_31px] justify-items-center items-center">
          <svg class="w-[21px] h-[21px]"><use href="#s1"/></svg><svg class="w-[21px] h-[21px]"><use href="#s2"/></svg><svg class="w-[21px] h-[21px]"><use href="#s3"/></svg><svg class="w-[21px] h-[21px]"><use href="#s4"/></svg><svg class="w-[21px] h-[21px]"><use href="#s5"/></svg>
          <svg class="w-[21px] h-[21px]"><use href="#s6"/></svg><svg class="w-[21px] h-[21px]"><use href="#s7"/></svg><svg class="w-[21px] h-[21px]"><use href="#s8"/></svg><svg class="w-[21px] h-[21px]"><use href="#s9"/></svg><svg class="w-[21px] h-[21px]"><use href="#s10"/></svg>
        </div>
      </div>
    </div>
    <div class="h-[21px] flex items-center justify-center gap-[8px] text-[15px] text-[#d8dee5]">Layers<svg class="w-[9px] h-[5px]"><use href="#dn"/></svg></div>
  </div>

  <!-- Groups -->
  <div class="w-[85px] flex flex-col border-r border-[#262c36]">
    <div class="h-[101px] flex">
      <div class="w-[50px] flex flex-col items-center pt-[7px]">
        <svg class="w-[40px] h-[40px]"><use href="#group"/></svg>
        <span class="mt-[6px]">Group</span>
      </div>
      <div class="w-[29px] grid grid-rows-[30px_30px_28px] pt-[5px] justify-items-center items-center">
        <svg class="w-[22px] h-[22px]"><use href="#g1"/></svg>
        <svg class="w-[22px] h-[22px]"><use href="#g2"/></svg>
        <div class="w-[29px] h-[27px] bg-[#4c5b70] border border-[#66b3ea] flex items-center justify-center"><svg class="w-[22px] h-[22px]"><use href="#g3"/></svg></div>
      </div>
    </div>
    <div class="h-[21px] flex items-center justify-center gap-[7px] text-[15px] text-[#d8dee5]">Groups<svg class="w-[9px] h-[5px]"><use href="#dn"/></svg></div>
  </div>

  <!-- View -->
  <div class="flex-1 flex flex-col">
    <div class="h-[101px] w-[78px] flex flex-col items-center pt-[18px]">
      <svg class="w-[40px] h-[30px]"><use href="#base"/></svg>
      <span class="mt-[12px]">Base</span>
      <svg class="mt-[1px] w-[7px] h-[4px]"><use href="#dn"/></svg>
    </div>
    <div class="h-[21px] flex items-center pl-[6px] text-[15px] text-[#d8dee5]">View<svg class="ml-[8px] w-[9px] h-[5px]"><use href="#dn"/></svg><svg class="ml-[10px] w-[7px] h-[7px]"><use href="#corner"/></svg></div>
  </div>
</div>

<!-- document tabs -->
<div class="h-[38px] flex flex-col text-[14.6px] font-[Roboto,sans-serif]">
  <div class="h-[33px] pt-[5px] pl-[27px] flex items-stretch whitespace-nowrap">
    <div class="w-[153px] bg-[#2f3744] rounded-t-[10px] pl-[12px] pt-[4px] text-[#c3c9d1] flex items-center">Start</div>
    <div class="ml-[2px] w-[191px] bg-[#2f3744] rounded-t-[10px] pl-[12px] pt-[4px] text-[#c3c9d1] flex items-center">16.03_dodecahedron*
      <svg class="absolute left-[346px] w-[12px] h-[12px]" viewBox="0 0 12 12"><path d="M1 1l10 10M11 1L1 11" stroke="#c7ccd2" stroke-width="1.800"/></svg>
    </div>
    <div class="ml-[2px] w-[153px] bg-[#3b4453] rounded-t-[10px] pl-[13px] pt-[4px] text-[#e0e5ea] flex items-center">Drawing2*
      <svg class="absolute left-[500px] w-[12px] h-[12px]" viewBox="0 0 12 12"><path d="M1 1l10 10M11 1L1 11" stroke="#c7ccd2" stroke-width="1.800"/></svg>
    </div>
    <div class="ml-[11px] w-[24px] h-[20px] self-center mt-[2px] bg-[#2f3744] rounded-[4px] flex items-center justify-center">
      <svg class="w-[11px] h-[11px]" viewBox="0 0 11 11"><path d="M5.500 0v11M0 5.500h11" stroke="#b9c0c9" stroke-width="2"/></svg>
    </div>
  </div>
  <div class="h-[5px] bg-[#3b4453]"></div>
</div>

<!-- drawing area -->
<div class="h-[793px] relative overflow-hidden font-[Roboto,sans-serif]">
  <svg class="absolute inset-0" width="1920" height="793" viewBox="0 214 1920 793">
    <!-- axis lines behind the model -->
    <path d="M720 214L788 583" stroke="#343b47" stroke-width="1"/>
    <path d="M0 672L788 583" stroke="#343b47" stroke-width="1"/>
    <path d="M836 576L1920 453" stroke="#6d2527" stroke-width="1"/>
    <!-- model faces -->
    <polygon points="788,583 955,513 937,566" fill="#636769"/>
    <polygon points="955,513 1093,608 937,566" fill="#4f5356"/>
    <polygon points="788,583 937,566 828,720" fill="#75797c"/>
    <polygon points="937,566 1016,735 828,720" fill="#6d7074"/>
    <polygon points="937,566 1093,608 1016,735" fill="#5f6266"/>
    <polygon points="788,583 828,720 780,763" fill="#606468"/>
    <polygon points="780,763 828,720 919,857" fill="#3f4347"/>
    <polygon points="828,720 1016,735 919,857" fill="#505357"/>
    <path d="M836 576L937 566" stroke="#8d6063" stroke-width="1"/>
    <path d="M937 566L1020 557" stroke="#6f3a3c" stroke-width="1"/>
    <path d="M805 642L848 880L866 973" stroke="#1d6a22" stroke-width="1" fill="none"/>
    <!-- model edges -->
    <g stroke="#f4f4f4" stroke-width="1.300" fill="none">
      <path d="M830 565L955 513L1093 608L1016 735L919 857L780 763L788 590"/>
      <path d="M955 513L937 566L1093 608M937 566L1016 735L828 720L919 857M937 566L828 720L780 763M805 630L828 720"/>
    </g>
    <!-- ucs icon -->
    <polygon points="789,579 828,568 830,576 790,583" fill="#365a94"/>
    <line x1="790" y1="581.500" x2="836" y2="576.500" stroke="#b85a5c" stroke-width="6" stroke-linecap="round"/>
    <line x1="790" y1="581" x2="835" y2="576" stroke="#d08082" stroke-width="1.500"/>
    <line x1="789" y1="585" x2="802" y2="641" stroke="#3f9a4d" stroke-width="6"/>
    <path d="M824 551h15l-14 15h14" fill="none" stroke="#1d6fe8" stroke-width="1.200"/>
    <path d="M835 558l13 13M848 558l-13 13" stroke="#e02c2c" stroke-width="1"/>
    <path d="M805 632l2 10M805 632m1 3l9-8" stroke="#2ea836" stroke-width="1" fill="none"/>
    <!-- crosshair -->
    <path d="M1524 695L1542 800" stroke="#8dfc6e" stroke-width="1.200"/>
    <path d="M1503 732L1585 724" stroke="#ff7b73" stroke-width="1.200"/>
    <path d="M1509 736L1573 717" stroke="#8a86f5" stroke-width="1.200"/>
    <rect x="1526" y="726.500" width="6" height="6" fill="#222933" stroke="#fff" stroke-width="1.200"/>
    <!-- viewcube -->
    <ellipse cx="1828" cy="360" rx="61" ry="47" fill="none" stroke="#3d4650" stroke-width="14" transform="rotate(-5 1828 360)"/>
    <text transform="translate(1817 306) rotate(-165)" font-family="Roboto" font-size="17" font-weight="700" fill="#bdbfc0" text-anchor="middle" dominant-baseline="central">W</text>
    <polygon points="1788,315 1829,307 1859,302 1868,350 1839,365 1798,367" fill="#a8aaaa"/>
    <polygon points="1829,307 1859,302 1868,350 1839,365" fill="#8f9294"/>
    <polygon points="1823,320 1836,317 1843,352 1830,355" fill="#8c9199"/>
    <path d="M1829 307L1839 365" stroke="#4a4d50" stroke-dasharray="3 2"/>
    <text transform="translate(1833 333) rotate(176)" font-family="Roboto" font-size="15" font-weight="700" fill="#3a3f46" textLength="41" lengthAdjust="spacingAndGlyphs">BOTTOM</text>
    <text transform="translate(1846 314) rotate(78)" font-family="Roboto" font-size="11" font-weight="700" fill="#3a3f46" textLength="34" lengthAdjust="spacingAndGlyphs">RIGHT</text>
    <text transform="translate(1890 344) rotate(70)" font-family="Roboto" font-size="22" font-weight="700" fill="#c0c2c3" text-anchor="middle" dominant-baseline="central">N</text>
    <text transform="translate(1764 364) rotate(100)" font-family="Roboto" font-size="20" font-weight="700" fill="#c0c2c3" text-anchor="middle" dominant-baseline="central">S</text>
    <text transform="translate(1843 408) rotate(-12)" font-family="Roboto" font-size="22" font-weight="700" fill="#c0c2c3" text-anchor="middle" dominant-baseline="central">E</text>
  </svg>

  <div class="absolute left-[2px] top-[7px] text-[15.5px] leading-[18px] text-[#e4e8ec]">[−][Custom View][X-Ray]</div>
  <div class="absolute right-[11px] top-[11px] flex items-center gap-[13px]">
    <svg class="w-[13px] h-[4px] mt-[6px]" viewBox="0 0 13 4"><rect width="13" height="3" fill="#e8e8e8"/></svg>
    <svg class="w-[12px] h-[12px]" viewBox="0 0 12 12"><path d="M3 3V1h8v8H9M1 3h8v8H1z" fill="none" stroke="#e8e8e8" stroke-width="1.800"/></svg>
    <svg class="w-[11px] h-[11px]" viewBox="0 0 11 11"><path d="M1 1l9 9M10 1l-9 9" stroke="#e8e8e8" stroke-width="2"/></svg>
  </div>

  <div class="absolute left-[1788px] top-[219px] w-[80px] h-[19px] rounded-[5px] bg-[#8e94a3] border border-[#a3a8b6] flex items-center pl-[4px] text-[12.5px] text-[#4a4f5b] gap-[4px]">Unnamed
    <svg class="w-[9px] h-[6px]" viewBox="0 0 9 6"><path d="M.5.5h8L4.500 5.500z" fill="none" stroke="#b3b7c3"/></svg>
  </div>

  <!-- navigation bar -->
  <div class="absolute left-[1877px] top-[269px] w-[40px] h-[259px] rounded-[4px] bg-[#565d67] flex flex-col items-center">
    <svg class="w-[40px] h-[259px]" viewBox="0 0 40 259" fill="none" stroke="#454b55" stroke-width="1.500">
      <circle cx="33" cy="6" r="3.500"/>
      <path d="M20 22c-9 0-14 6-14 13s6 13 14 13c9 0 13-8 13-17v-9zM20 27a8 8 0 1 0 .01 0M9 40c5 3 17 3 22 0"/>
      <polygon points="17,58 23,58 20,62" fill="#454b55" stroke="none"/>
      <path d="M2 68h36" stroke-width=".8"/>
      <path d="M14 100c-4-4-8-10-8-12 0-2 3-2 5 1l2 3V80c0-2 3-2 3 0v-5c0-2 3-2 3 0v3c0-2 3-2 3 0v2c0-2 3-2 3 0 2-2 3 0 3 2 0 7-1 12-4 18z"/>
      <path d="M6 109l18 18M23 109L6 127M6 115v-6h6M23 115v-6h-6M6 121v6h6"/>
      <circle cx="28" cy="131" r="5.500"/><path d="M32 135l5 5" stroke-width="3"/>
      <polygon points="17,148 23,148 20,152" fill="#454b55" stroke="none"/>
      <path d="M17 190v-26h-2l5-6 5 6h-2v26zM14 174c-6 1-9 3-9 6 0 4 6 6 15 6s15-2 15-6c0-3-3-5-9-6"/>
      <polygon points="17,195 23,195 20,199" fill="#454b55" stroke="none"/>
      <path d="M2 205h36" stroke-width=".8"/>
      <rect x="6" y="211" width="8" height="7"/><rect x="16" y="211" width="8" height="7"/><rect x="26" y="211" width="8" height="7"/>
      <rect x="6" y="222" width="20" height="17"/><polygon points="11,225 21,230.500 11,236" fill="#454b55" stroke="none"/>
      <circle cx="33" cy="251" r="3.500"/><path d="M30 251h6"/>
    </svg>
  </div>

  <!-- command history and command line -->
  <div class="absolute left-[461px] top-[685px] flex flex-col gap-[6px] font-['DejaVu_Sans_Mono',monospace] text-[13px] leading-[19px]">
    <div class="h-[19px] w-[77px] rounded-[2px] bg-[#58595a] text-[#b0b0b0] text-center">Command:</div>
    <div class="h-[19px] w-[77px] rounded-[2px] bg-[#58595a] text-[#d0d0d0] text-center">Command:</div>
    <div class="h-[19px] w-[77px] rounded-[2px] bg-[#58595a] text-[#f0f0f0] text-center">Command:</div>
  </div>
  <div class="absolute left-[384px] top-[759px] h-[34px] w-[1152px] flex">
    <div class="w-[70px] bg-[#2e3542] rounded-l-[3px] flex items-center pl-[5px]">
      <svg class="w-[7px] h-[22px]" viewBox="0 0 7 22"><g fill="#d5dae0"><rect width="2" height="2"/><rect x="4" width="2" height="2"/><rect y="5" width="2" height="2"/><rect x="4" y="5" width="2" height="2"/><rect y="10" width="2" height="2"/><rect x="4" y="10" width="2" height="2"/><rect y="15" width="2" height="2"/><rect x="4" y="15" width="2" height="2"/><rect y="20" width="2" height="2"/><rect x="4" y="20" width="2" height="2"/></g></svg>
      <svg class="ml-[6px] w-[12px] h-[12px]" viewBox="0 0 12 12"><path d="M1 1l10 10M11 1L1 11" stroke="#d5dae0" stroke-width="1.800"/></svg>
      <svg class="ml-[13px] w-[20px] h-[20px]" viewBox="0 0 20 20"><path d="M1 17l11-11c-1-3 1-6 5-5l-3 3 1 2 2 1 3-3c1 4-2 6-5 5L4 20z" fill="#d5dae0"/></svg>
    </div>
    <div class="flex-1 bg-white rounded-r-[3px] flex items-center pl-[5px] border-y border-[#222933]">
      <svg class="w-[20px] h-[19px]" viewBox="0 0 20 19"><rect width="20" height="19" fill="#b9bbbe"/><rect y="0" width="20" height="4" fill="#6a6d72"/><path d="M2 7l3 2-3 2M6 12h5" stroke="#333" fill="none"/></svg>
      <svg class="ml-[3px] w-[9px] h-[5px]" viewBox="0 0 9 5"><polygon points="0,0 9,0 4.500,5" fill="#6e7176"/></svg>
      <div class="ml-[3px] w-[2px] h-[19px] bg-black"></div>
      <svg class="ml-auto mr-[6px] w-[9px] h-[5px]" viewBox="0 0 9 5"><polygon points="0,5 9,5 4.500,0" fill="#6e7176"/></svg>
    </div>
  </div>
</div>

<!-- layout tabs and status bar -->
<div class="h-[35px] border-t border-[#3b4453] flex font-[Roboto,sans-serif] text-[14.5px] text-[#e9edf1]">
  <div class="w-[16px]"></div>
  <div class="h-[22px] w-[71px] bg-[#3b4453] rounded-b-[8px] pt-[2px] flex items-center justify-center font-bold text-[#f2f4f6]">Model</div>
  <div class="ml-[4px] h-[22px] w-[73px] bg-[#2f3744] rounded-b-[8px] pt-[2px] flex items-center justify-center text-[#c3c9d1]">Layout1</div>
  <div class="ml-[4px] h-[22px] w-[78px] bg-[#2f3744] rounded-b-[8px] pt-[2px] flex items-center justify-center text-[#c3c9d1]">Layout2</div>
  <div class="ml-[8px] h-[20px] w-[27px] bg-[#2f3744] rounded-b-[6px] flex items-center justify-center"><svg class="w-[11px] h-[11px]" viewBox="0 0 11 11"><path d="M5.500 0v11M0 5.500h11" stroke="#b9c0c9" stroke-width="2"/></svg></div>

  <div class="ml-auto mr-[4px] pt-[1px] flex gap-[3px] h-[30px]">
    <div class="w-[60px] bg-[#3b4453] flex items-center justify-center pt-[3px] text-[15.5px]">MODEL</div>
    <div class="w-[79px] bg-[#3b4453] flex items-center">
      <div class="w-[28px] h-full bg-[#5f8fc4] flex items-center justify-center"><svg class="w-[20px] h-[20px]" viewBox="0 0 20 20"><path d="M5 0v20M10 0v20M15 0v20M0 5h20M0 10h20M0 15h20" stroke="#fff" stroke-width="1"/></svg></div>
      <div class="w-[30px] flex justify-center"><svg class="w-[16px] h-[16px]" viewBox="0 0 16 16"><g fill="#d8dde3"><rect width="3" height="3"/><rect x="6.500" width="3" height="3"/><rect x="13" width="3" height="3"/><rect y="6.500" width="3" height="3"/><rect x="6.500" y="6.500" width="3" height="3"/><rect x="13" y="6.500" width="3" height="3"/><rect y="13" width="3" height="3"/><rect x="6.500" y="13" width="3" height="3"/><rect x="13" y="13" width="3" height="3"/></g></svg></div>
      <svg class="ml-[6px] w-[10px] h-[6px]"><use href="#dn"/></svg>
    </div>
    <div class="w-[211px] bg-[#3b4453] flex items-center">
      <div class="w-[31px] flex justify-center"><svg class="w-[20px] h-[22px]" viewBox="0 0 20 22"><path d="M1 0v21h19M1 14h7v7" fill="none" stroke="#d8dde3" stroke-width="1.100"/></svg></div>
      <div class="w-[28px] h-full bg-[#5f8fc4] flex items-center justify-center"><svg class="w-[20px] h-[20px]" viewBox="0 0 20 20"><circle cx="9" cy="11" r="8" fill="none" stroke="#e8edf2" stroke-width="1.400"/><path d="M1 13h12M3 18L16 2" fill="none" stroke="#e8edf2"/></svg></div>
      <svg class="ml-[6px] w-[10px] h-[6px]"><use href="#dn"/></svg>
      <div class="ml-[4px] w-[30px] flex justify-center"><svg class="w-[20px] h-[22px]" viewBox="0 0 20 22"><path d="M4 1l12 20" stroke="#e05a5a" stroke-width="1.100"/><path d="M9 2l4 18" stroke="#5ac46e" stroke-width="1.100"/><rect x="8" y="8" width="4" height="4" fill="#3b4453" stroke="#e8e8e8"/></svg></div>
      <svg class="ml-[5px] w-[10px] h-[6px]"><use href="#dn"/></svg>
      <div class="ml-[7px] w-[28px] h-full bg-[#5f8fc4] flex items-center justify-center"><svg class="w-[20px] h-[20px]" viewBox="0 0 20 20"><path d="M0 18h20M2 16L14 4" stroke="#e8edf2" stroke-width="1.300"/><circle cx="9" cy="10" r="2" fill="#e8edf2"/></svg></div>
      <div class="ml-[2px] w-[28px] h-full bg-[#5f8fc4] flex items-center justify-center"><svg class="w-[20px] h-[22px]" viewBox="0 0 20 22"><rect x="2" y="4" width="16" height="17" fill="none" stroke="#e8edf2" stroke-width="1.200"/><rect x="0" y="0" width="6" height="6" fill="#5f8fc4" stroke="#e8edf2"/></svg></div>
      <svg class="ml-[6px] w-[10px] h-[6px]"><use href="#dn"/></svg>
    </div>
    <div class="w-[181px] bg-[#3b4453] flex items-center">
      <div class="ml-[1px] w-[28px] h-full bg-[#5f8fc4] flex items-center justify-center relative"><svg class="w-[20px] h-[24px]" viewBox="0 0 24 24"><use href="#anno"/><circle cx="20" cy="6" r="3.500" fill="none" stroke="#fff"/></svg></div>
      <div class="w-[30px] flex justify-center"><svg class="w-[20px] h-[24px]" viewBox="0 0 24 24"><use href="#anno"/><path d="M16 8l4-6-1 5h4l-4 6 1-5z" fill="#e2e2e2"/></svg></div>
      <div class="w-[28px] flex justify-center"><svg class="w-[20px] h-[24px]" viewBox="0 0 24 24"><use href="#anno"/></svg></div>
      <span class="ml-[7px] mt-[2px] text-[14px] whitespace-nowrap">1:1 / 100%</span>
      <svg class="ml-[5px] w-[10px] h-[6px]"><use href="#dn"/></svg>
    </div>
    <div class="w-[47px] bg-[#3b4453] flex items-center">
      <svg class="ml-[5px] w-[20px] h-[20px]" viewBox="0 0 20 20"><path d="M8 0h4l1 3 3-1 2 3-2 2 1 3-1 1-3 1 1 3-3 2-2-2-2 0-2 2-3-2 1-3-3-2 0-2 3-1-1-3 3-2 2 2z" fill="#d8dde3"/><circle cx="10" cy="10" r="3" fill="#3b4453"/></svg>
      <svg class="ml-[9px] w-[10px] h-[6px]"><use href="#dn"/></svg>
    </div>
    <div class="w-[30px] bg-[#3b4453] flex items-center justify-center"><svg class="w-[20px] h-[20px]" viewBox="0 0 20 20"><path d="M10 0v20M0 10h20" stroke="#d8dde3" stroke-width="2.400"/></svg></div>
    <div class="w-[32px] bg-[#3b4453] flex items-center justify-center"><svg class="w-[22px] h-[24px]" viewBox="0 0 22 24"><rect x="1" y="1" width="8" height="8" fill="none" stroke="#c7ccd2" stroke-width="1.200"/><circle cx="16" cy="11" r="5" fill="none" stroke="#c7ccd2" stroke-width="1.200"/><path d="M6 15l5 8H1z" fill="none" stroke="#c7ccd2" stroke-width="1.200"/></svg></div>
    <div class="w-[3px] bg-[#3b4453]"></div>
    <div class="w-[58px] bg-[#3b4453] flex items-center">
      <svg class="ml-[5px] w-[20px] h-[20px]" viewBox="0 0 20 20"><rect x=".5" y=".5" width="19" height="19" fill="none" stroke="#c7ccd2"/><path d="M11 9l5-5M12 4h4v4M9 11l-5 5M8 16H4v-4" stroke="#c7ccd2" stroke-width="1.200" fill="none"/></svg>
      <svg class="ml-[10px] w-[20px] h-[18px]" viewBox="0 0 20 18"><path d="M0 2h20M0 9h20M0 16h20" stroke="#d8dde3" stroke-width="3"/></svg>
    </div>
  </div>
</div>

<!-- windows taskbar -->
<div class="h-[38px] bg-[#424242] flex text-[#e8e8e8] font-[Roboto,sans-serif] text-[14px]">
  <div class="w-[45px] flex items-center justify-center"><svg class="w-[20px] h-[20px]" viewBox="0 0 20 20"><path d="M0 3l8.500-1.200v7.700H0zM9.500 1.600L20 0v9.500H9.500zM0 10.500h8.500v7.700L0 17zM9.500 10.500H20V20L9.500 18.400z" fill="#fff"/></svg></div>
  <div class="w-[45px] flex items-center justify-center"><svg class="w-[20px] h-[20px]" viewBox="0 0 20 20"><circle cx="12" cy="8" r="7" fill="none" stroke="#fff" stroke-width="1.300"/><path d="M7 13l-6 6" stroke="#fff" stroke-width="1.500"/></svg></div>
  <div class="w-[47px] flex items-center justify-center"><svg class="w-[20px] h-[20px]" viewBox="0 0 20 20"><path d="M1 1h13M1 19h13M1 6h13v8H1zM18 1v7M18 12v7M18 8v3" stroke="#fff" stroke-width="1.200" fill="none"/></svg></div>

  <div class="w-[46px] flex justify-center"><div class="w-[35px] flex items-center justify-center border-b-2 border-[#76b9ed]"><svg class="w-[16px] h-[16px]" viewBox="0 0 20 20"><path d="M8 0h4l1 3 3-1 2 3-2 2 2 3-2 3 1 2-3 2-2-1-1 3H8l-1-3-3 1-2-3 2-2-2-3 2-3-1-2 3-2 2 1z" fill="#fff"/><circle cx="10" cy="10" r="3.500" fill="#424242"/></svg></div></div>
  <div class="w-[46px] flex justify-center"><div class="w-[35px] flex items-center justify-center border-b-2 border-[#76b9ed]"><svg class="w-[18px] h-[18px]" viewBox="0 0 18 18"><path d="M0 1h7l2 2h9v15H0z" fill="#f5c33f"/><rect y="5" width="18" height="5" fill="#ffdf7a"/><rect x="4" y="11" width="10" height="7" fill="#2d8fd5"/><rect x="7" y="14" width="4" height="4" fill="#f5c33f"/></svg></div></div>
  <div class="w-[46px] flex justify-center"><div class="w-[35px] flex items-center justify-center border-b-2 border-[#76b9ed]"><svg class="w-[19px] h-[19px]" viewBox="0 0 20 20"><circle cx="10" cy="10" r="10" fill="#d93a32"/><path d="M10 10L1.500 15A10 10 0 0 0 12 20z" fill="#2d9c4a"/><path d="M10 5h9a10 10 0 0 1-7 15z" fill="#f5c22e"/><circle cx="10" cy="10" r="5" fill="#fff"/><circle cx="10" cy="10" r="3.800" fill="#4285f4"/></svg></div></div>
  <div class="w-[46px] flex items-center justify-center"><svg class="w-[19px] h-[19px]" viewBox="0 0 20 20"><circle cx="10" cy="10" r="10" fill="#1ed05f"/><path d="M4 7c4-1 8-1 12 1M5 10c3-1 7-1 10 1M6 13c3-1 5-1 8 .5" stroke="#222" stroke-width="1.700" fill="none"/></svg></div>
  <div class="w-[46px] flex items-center justify-center"><svg class="w-[20px] h-[20px]" viewBox="0 0 20 20"><rect width="20" height="20" fill="#0a0a0a"/><path d="M6 2h3l2 8V2h3v16h-3l-2-8v8H6z" fill="#c4161e"/></svg></div>
  <div class="w-[46px] flex items-center justify-center"><svg class="w-[18px] h-[20px]" viewBox="0 0 18 20"><ellipse cx="9" cy="10" rx="9" ry="10" fill="#f3c78a"/><path d="M0 13c3-3 5-3 8-1s6 1 10-1c0 6-4 9-9 9s-9-3-9-7z" fill="#6f86a8"/></svg></div>
  <div class="w-[46px] flex items-center justify-center"><svg class="w-[16px] h-[22px]" viewBox="0 0 16 22"><path d="M8 0c2 5 8 9 8 14a8 8 0 0 1-16 0C0 9 6 5 8 0z" fill="#a855c8"/><path d="M0 14c4-3 11-3 16 0a8 8 0 0 1-16 0z" fill="#3a8fd8"/><path d="M8 0c1 3 3 5 4 7H4c1-2 3-4 4-7z" fill="#f39a45"/></svg></div>
  <div class="w-[46px] flex items-center justify-center"><svg class="w-[18px] h-[18px]" viewBox="0 0 18 18"><rect width="18" height="18" rx="4" fill="#ec2f7a"/><rect x="9" width="9" height="9" rx="3" fill="#f59a1e"/><rect x="9" y="9" width="9" height="9" rx="3" fill="#3fbf6f"/><circle cx="9" cy="9" r="4.500" fill="none" stroke="#fff" stroke-width="1.500"/></svg></div>
  <div class="w-[46px] flex justify-center"><div class="w-[35px] flex items-center justify-center border-b-2 border-[#76b9ed]"><svg class="w-[19px] h-[19px]" viewBox="0 0 20 20"><rect width="20" height="20" rx="6" fill="#2d8cff"/><rect x="3.500" y="6.500" width="9" height="7" rx="1.500" fill="#fff"/><path d="M13 10l4-3v6z" fill="#fff"/></svg></div></div>
  <div class="w-[46px] flex justify-center"><div class="w-[35px] flex items-center justify-center border-b-2 border-[#76b9ed]"><svg class="w-[18px] h-[20px]" viewBox="0 0 18 20"><path d="M2 0h14a2 2 0 0 1 2 2v18l-4-3H2a2 2 0 0 1-2-2V2a2 2 0 0 1 2-2z" fill="#7289da"/><path d="M4 6c3-1 7-1 10 0l1 6c-1 1-2 1-3 1l-1-1H7l-1 1c-1 0-2 0-3-1z" fill="#fff"/><circle cx="7" cy="9" r="1.200" fill="#7289da"/><circle cx="11" cy="9" r="1.200" fill="#7289da"/></svg></div></div>
  <div class="w-[46px] flex justify-center"><div class="w-[35px] flex items-center justify-center border-b-2 border-[#76b9ed]"><svg class="w-[19px] h-[19px]" viewBox="0 0 20 20"><circle cx="10" cy="10" r="10" fill="#f4f4f4"/><rect x="5.500" y="3" width="3" height="7" rx="1.500" fill="#36c5f0"/><rect x="11" y="3" width="3" height="7" rx="1.500" fill="#2eb67d"/><rect x="3" y="11" width="7" height="3" rx="1.500" fill="#e01e5a"/><rect x="11" y="11" width="7" height="3" rx="1.500" fill="#ecb22e"/></svg></div></div>
  <div class="w-[46px] flex items-center justify-center"><svg class="w-[20px] h-[20px]" viewBox="0 0 20 20"><rect width="20" height="20" rx="2" fill="#ffd02f"/><path d="M6 4h3L6 16H4zM10 4h3l-3 12H8zM14 4h3l-3 12h-2z" fill="#050038"/></svg></div>
  <div class="w-[46px] flex items-center justify-center"><svg class="w-[18px] h-[20px]" viewBox="0 0 18 20"><rect width="18" height="20" rx="3" fill="#001e36"/><text x="9" y="14" text-anchor="middle" font-family="Roboto" font-size="11" font-weight="700" fill="#31a8ff">Ps</text></svg></div>
  <div class="w-[46px] flex justify-center bg-[#696969] border-b-2 border-[#76b9ed]"><div class="flex items-center justify-center"><svg class="w-[20px] h-[24px]" viewBox="0 0 20 24"><rect width="20" height="24" fill="#f1e4dc"/><path d="M8 3h5l5 18h-4l-1-4H7l-1 4H2zM8 14h4l-2-7z" fill="#b3252c"/></svg></div></div>
  <div class="w-[46px] flex items-center justify-center"><svg class="w-[20px] h-[24px]" viewBox="0 0 20 24"><rect width="20" height="24" fill="#e8eff5"/><text x="10" y="18" text-anchor="middle" font-family="Roboto" font-size="18" font-weight="700" fill="#2e6da4">R</text></svg></div>
  <div class="w-[46px] flex justify-center"><div class="w-[35px] flex items-center justify-center border-b-2 border-[#76b9ed]"><svg class="w-[19px] h-[19px]" viewBox="0 0 20 20"><path d="M1 19l1.500-5A9 9 0 1 1 6 17.500z" fill="#2bd366" stroke="#fff" stroke-width="1.200"/><path d="M7 6c-1 1-1 3 1 5s4 3 5 2l1-1-2-1-1 1c-1 0-3-2-3-3l1-1-1-2z" fill="#fff"/></svg></div></div>
  <div class="w-[46px] flex justify-center"><div class="w-[35px] flex items-center justify-center border-b-2 border-[#76b9ed]"><svg class="w-[18px] h-[18px]" viewBox="0 0 18 18"><rect width="18" height="18" rx="4" fill="#ec2f7a"/><rect x="9" width="9" height="9" rx="3" fill="#f59a1e"/><rect x="9" y="9" width="9" height="9" rx="3" fill="#3fbf6f"/><circle cx="9" cy="9" r="4.500" fill="none" stroke="#fff" stroke-width="1.500"/></svg></div></div>
  <div class="w-[45px] flex justify-center"><div class="w-[35px] flex items-center justify-center border-b-2 border-[#76b9ed]"><svg class="w-[18px] h-[24px]" viewBox="0 0 18 24"><rect y="1" width="15" height="23" fill="#e9edd9"/><rect y="15" width="15" height="9" fill="#6abf3c"/><path d="M4 7v6M7 9v4M10 10v3" stroke="#444"/><polygon points="11,14 17,1 18,2 13,15" fill="#d98c2e"/></svg></div></div>
  <div class="w-[47px] flex justify-center"><div class="w-[35px] flex items-center justify-center border-b-2 border-[#76b9ed]"><svg class="w-[18px] h-[20px]" viewBox="0 0 18 20"><rect width="18" height="20" fill="#3b9ae8"/><path d="M0 20V14l6-6 5 5 3-2 4 4v5z" fill="#1d4f94"/><circle cx="13" cy="5" r="2" fill="#fff"/></svg></div></div>

  <div class="ml-auto flex items-center pr-[30px]">
    <svg class="w-[16px] h-[9px]" viewBox="0 0 16 9"><path d="M1 8l7-7 7 7" fill="none" stroke="#fff" stroke-width="1.200"/></svg>
    <svg class="ml-[12px] w-[22px] h-[15px]" viewBox="0 0 22 15"><rect x="4" y="2" width="17" height="11" fill="none" stroke="#fff"/><rect x="6" y="4" width="13" height="7" fill="#eee"/><path d="M0 3h4M2 3v6" stroke="#fff"/></svg>
    <svg class="ml-[9px] w-[20px] h-[20px]" viewBox="0 0 20 20"><path d="M1 7h4l5-5v16l-5-5H1zM13 6a5 5 0 0 1 0 8M15 3a9 9 0 0 1 0 14" fill="none" stroke="#e4e4e4"/></svg>
    <svg class="ml-[11px] w-[18px] h-[18px]" viewBox="0 0 18 18"><path d="M1 17C2 8 8 2 17 1M6 17c0-5 4-9 9-10M10 17c0-2 2-4 4-5" fill="none" stroke="#a8a8a8"/><circle cx="14" cy="16" r="1.500" fill="#e4e4e4"/></svg>
    <svg class="ml-[14px] w-[20px] h-[24px]" viewBox="0 0 20 24"><path d="M3 22l9-18c1-3 4-2 4 0l-9 16M3 22l3-8c2-4 7-2 5 2-1 2-5 1-6 0" fill="none" stroke="#e8e8e8" stroke-width="1.100"/></svg>
    <span class="ml-[20px] w-[36px] whitespace-nowrap">12:38</span>
    <svg class="ml-[20px] w-[22px] h-[22px]" viewBox="0 0 22 22"><path d="M1 1h20v16h-7l-3 4-3-4H1z" fill="none" stroke="#fff" stroke-width="1.300"/></svg>
  </div>
</div>

</body>
</html>
